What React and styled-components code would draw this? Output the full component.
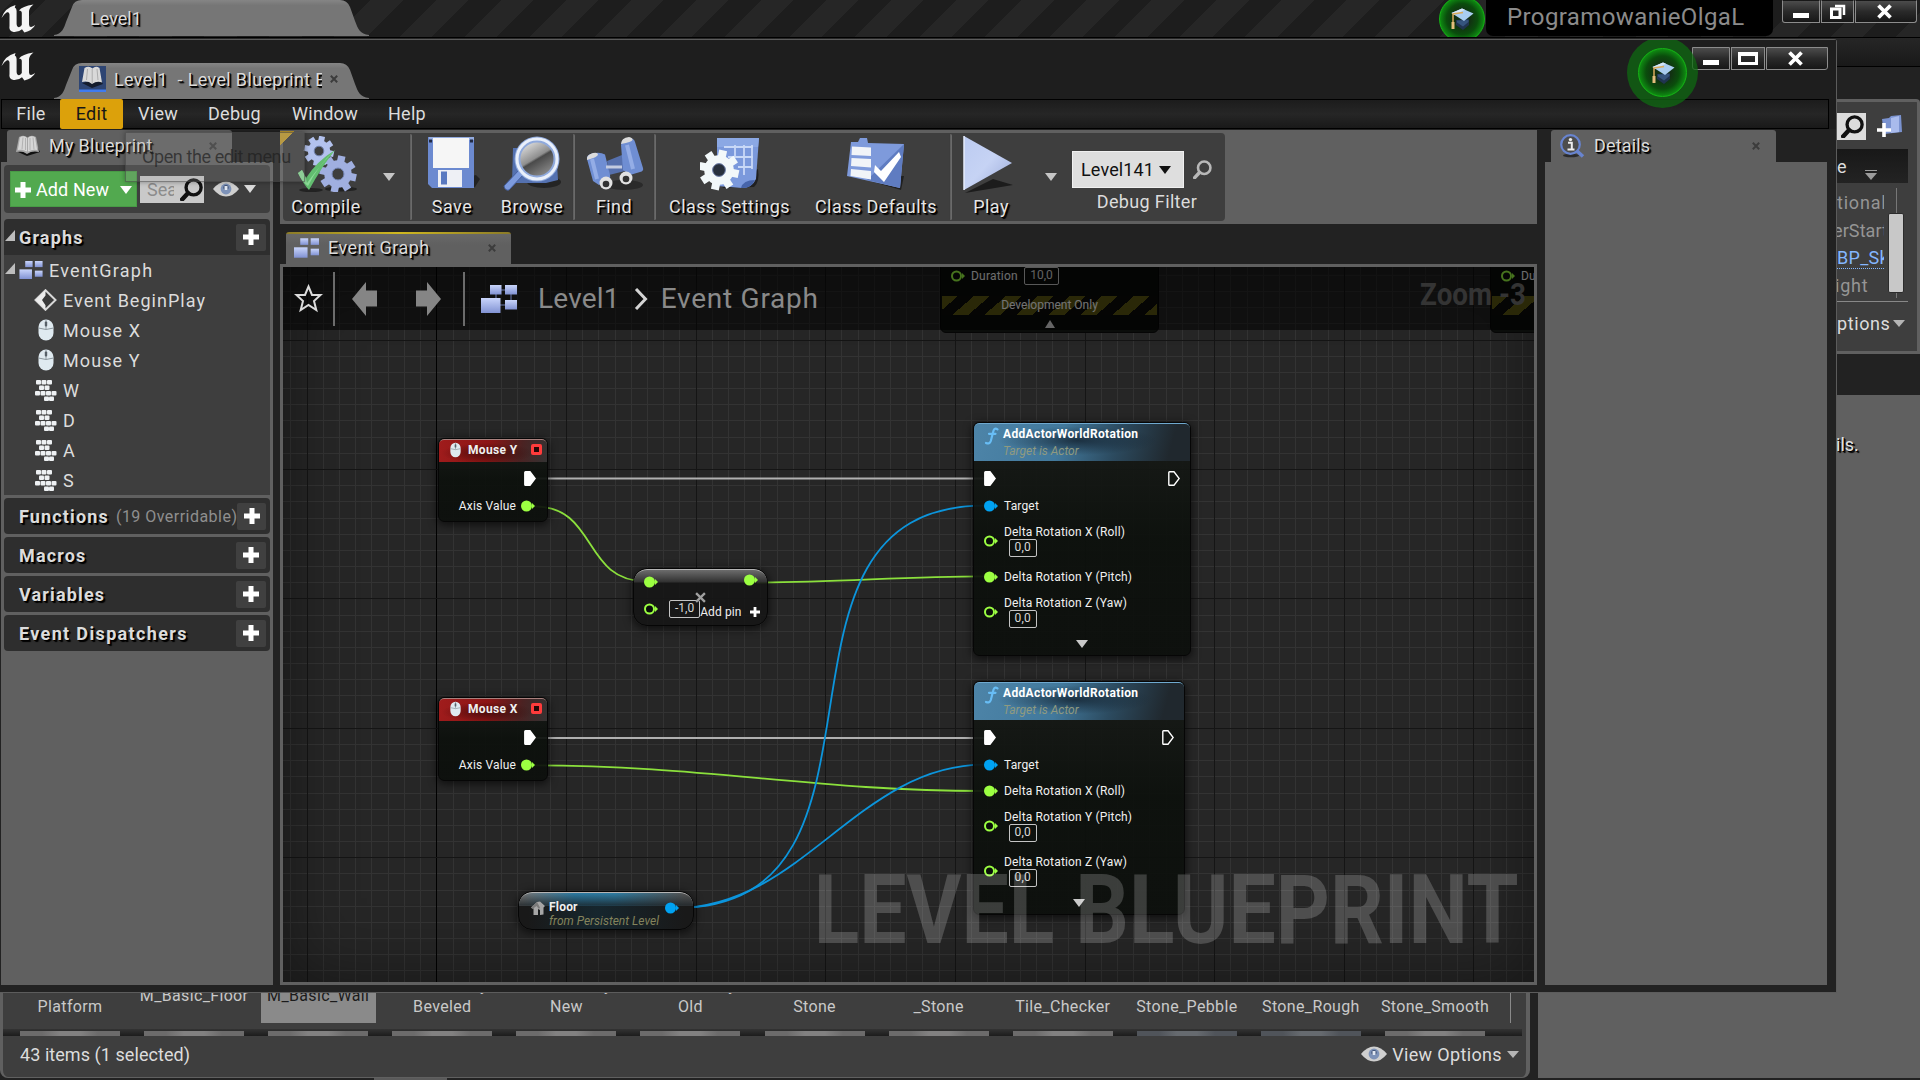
import React from 'react';
import styled, { createGlobalStyle, css } from 'styled-components';

const Global = createGlobalStyle`
  *, *::before, *::after { box-sizing: border-box; }
  body { margin: 0; background: #222; overflow: hidden; }
  svg { display: block; flex: none; }
`;

const GREEN = '#9cff42';
const BLUE = '#00a2f2';

/* ---------- shared pieces ---------- */

const Desktop = styled.div`
  position: relative;
  width: 1920px;
  height: 1080px;
  overflow: hidden;
  background: #222;
  color: #dcdcdc;
  font-family: Roboto, 'Liberation Sans', sans-serif;
  font-size: 18px;
  white-space: nowrap;
  cursor: default;
`;

const Text = styled.span`
  flex: none;
  font-size: ${(p) => p.$size || 18}px;
  font-weight: ${(p) => (p.$bold ? 700 : 400)};
  font-style: ${(p) => (p.$italic ? 'italic' : 'normal')};
  letter-spacing: ${(p) => p.$ls || 0}px;
  color: ${(p) => p.$color || 'inherit'};
  ${(p) => p.$shadow && css`text-shadow: 1px 1px 0 #000, 2px 2px 1px #000;`}
`;

const Caret = styled.span`
  flex: none;
  width: 0;
  height: 0;
  border-left: ${(p) => p.$w || 6}px solid transparent;
  border-right: ${(p) => p.$w || 6}px solid transparent;
  border-top: ${(p) => p.$h || 8}px solid ${(p) => p.$color || '#c6c6c6'};
  ${(p) => p.$up && css`transform: rotate(180deg);`}
`;

const Spacer = styled.div`flex: 1;`;

/* ---------- icons ---------- */

const Logo = () => (
  <svg width="35" height="29" viewBox="0 0 35 29">
    <path
      d="M.5 14Q3.500 4 14.500 1L13.800 3.400Q15.600 4 15.600 7v13Q15.800 23 18 23.200 19.600 22.800 20.800 21V9Q20.800 6.400 18 6.400 21 2.600 32.500.6 28.500 3.400 28 7v13.500q.2 2.700 2.200 2.500 1.800-.4 4-1.900Q31.500 26.500 23.400 28.500l-2.400-3.300Q17.500 28.400 12.500 28 7.500 27 8.500 21.500V10.500Q8.300 7.600 6 8.300 3 9.800.5 14Z"
      fill="#f4f4f4"
    />
  </svg>
);

const BookIcon = ({ w = 25, h = 22 }) => (
  <svg width={w} height={h} viewBox="0 0 25 22">
    <path d="M3 17 12 21l13-4-2-4z" fill="#111" />
    <path d="M4 2 1 17q6-1.500 11 2 5-3.500 12-2L21 2q-5-2.500-8.500.5Q9-.5 4 2Z" fill="#a8a8a8" />
    <path d="M5 2.500 2.800 15q5-.8 9.200 1.500V3Q9 0 5 2.500ZM20 2.500 22.200 15q-5-.8-9.200 1.500V3q3-3 7-.5Z" fill="#d6d6d6" />
    <path d="M8 2.500 7 14.500M10.500 3v12M15 3v12M18 2.500l1 12" stroke="#b2b2b2" strokeWidth="1" />
  </svg>
);

const LevelBookIcon = () => (
  <svg width="27" height="26" viewBox="0 0 27 26">
    <rect width="27" height="26" fill="#2e4573" />
    <rect y="23.500" width="27" height="2.500" fill="#3f7bf0" />
    <path d="M3 17 13 22l11-4-3-5z" fill="#141c2d" />
    <path d="M5.500 2 3 16q6-1.500 10 2 5-3.500 10-1.500L20.500 2q-4-2.500-7 .5Q10-.5 5.500 2Z" fill="#d9d9d9" />
    <path d="M13.200 3v14M8.500 3l-1 11M18 3l1 11" stroke="#adadad" strokeWidth="1" />
  </svg>
);

const CrossIcon = ({ s = 8, color = '#3c3c3c', w = 2 }) => (
  <svg width={s} height={s} viewBox="0 0 8 8">
    <path d="M.8.8 7.200 7.200M7.200.8.8 7.200" stroke={color} strokeWidth={w} />
  </svg>
);

const PlusIcon = ({ s = 16, w = 5 }) => (
  <svg width={s} height={s} viewBox="0 0 16 16">
    <path d="M8 0v16M0 8h16" stroke="#fff" strokeWidth={w} />
  </svg>
);

const Lens = ({ s = 22, color = '#111', w = 3.2 }) => (
  <svg width={s} height={s} viewBox="0 0 22 22">
    <circle cx="13" cy="9" r="7.200" fill="none" stroke={color} strokeWidth={w} />
    <path d="M7.500 14.500 2 20.500" stroke={color} strokeWidth={w + 1} strokeLinecap="round" />
  </svg>
);

const EyeIcon = () => (
  <svg width="26" height="16" viewBox="0 0 26 16">
    <path d="M0 8Q6 .5 13 .5T26 8q-6 7.500-13 7.500T0 8Z" fill="#cfcfcf" />
    <circle cx="13" cy="8" r="5.400" fill="#7d92b8" />
    <circle cx="13" cy="6.500" r="2.600" fill="#3c4f73" />
    <path d="M11.500 5h3v4h-3z" fill="#e0e7f2" />
  </svg>
);

const GraphIcon = ({ w = 25, h = 20, links }) => (
  <svg width={w} height={h} viewBox="0 0 36 28">
    <defs>
      <linearGradient id="gi" x1="0" y1="0" x2="0" y2="1">
        <stop offset="0" stopColor="#c9d5fb" />
        <stop offset="1" stopColor="#8192d3" />
      </linearGradient>
    </defs>
    {links && <path d="M20 5h6M15 8v8M30 8v9M18 20h8" stroke="#3e4560" strokeWidth="2" />}
    <rect x="9" y="0" width="11.500" height="9.500" fill="url(#gi)" />
    <rect x="24" y="0" width="12" height="9.500" fill="url(#gi)" />
    <rect x="0" y="13" width="19.500" height="15" fill="url(#gi)" />
    <rect x="24" y="15" width="12" height="9.500" fill="url(#gi)" />
  </svg>
);

const DiamondIcon = () => (
  <svg width="23" height="22" viewBox="0 0 23 22">
    <path d="M11.500 1.200 21.500 11 11.500 20.800 1.500 11Z" fill="#3a3a3a" stroke="#d8d8d8" strokeWidth="2" />
    <path d="M11.500 1.200 1.500 11l10 9.800v-4.500L8 11l3.500-4.500Z" fill="#ececec" />
  </svg>
);

const MouseIcon = ({ w = 16, h = 22 }) => (
  <svg width={w} height={h} viewBox="0 0 16 22">
    <rect x=".5" y=".5" width="15" height="21" rx="7.500" fill="#dfeaf0" />
    <path d="M.5 9q7.500 3 15 0M8 .5V10" stroke="#8b979e" strokeWidth="1" fill="none" />
    <rect x="6.800" y="2.500" width="2.400" height="5" rx="1" fill="#566068" />
  </svg>
);

const KeysIcon = () => (
  <svg width="23" height="23" viewBox="0 0 23 23">
    <g fill="#eef1f3">
      {[[2, 1], [7.500, 1], [13, 1], [5, 6.500], [10.500, 6.500], [1, 12], [6.500, 12], [12, 12], [17.500, 12], [10, 17.500], [15, 17.500]].map(([x, y]) => (
        <rect key={`${x}-${y}`} x={x} y={y} width="5" height="4.600" rx="1" />
      ))}
    </g>
  </svg>
);

const GradCap = () => (
  <svg width="24" height="22" viewBox="0 0 24 22">
    <path d="M6 12v5l7 5 6-5v-6z" fill="#20344f" />
    <path d="M7 12.500v2l6 4 5.500-4.500v-2z" fill="#35547d" />
    <path d="M1.500 5 12 .5l11.500 5L14 13z" fill="#a9cdf0" />
    <path d="M1.500 5 12 .5l3 1.300L4 7z" fill="#d3e6f8" />
    <path d="M13 4.500 3 6v13" stroke="#d9aa5c" strokeWidth="1.500" fill="none" />
    <path d="M3 14v7" stroke="#e3bd7c" strokeWidth="3" />
  </svg>
);

const Gear = ({ cx, cy, r, fill, hole = '#3e3e3e', n = 8 }) => {
  const teeth = Array.from({ length: n }, (_, i) => (
    <rect key={i} x={cx - r * 0.2} y={cy - r} width={r * 0.4} height={r * 0.5} fill={fill} transform={`rotate(${(360 / n) * i + 12} ${cx} ${cy})`} />
  ));
  return (
    <g>
      {teeth}
      <circle cx={cx} cy={cy} r={r * 0.74} fill={fill} />
      <circle cx={cx} cy={cy} r={r * 0.32} fill={hole} stroke="#6f80ad" strokeWidth="1" />
    </g>
  );
};

const CompileIcon = () => (
  <svg width="60" height="56" viewBox="0 0 60 56">
    <ellipse cx="44" cy="53" rx="16" ry="2.500" fill="#222" />
    <ellipse cx="14" cy="54" rx="12" ry="2" fill="#222" />
    <Gear cx={22} cy={15} r={15} fill="#b3c2ee" />
    <Gear cx={41} cy={38} r={18.500} fill="#a0afe0" />
    <path d="M1 37 5 34l4 8Q20 25 38 14 24 32 12 54 7 49 1 37Z" fill="#62bd70" />
    <path d="M1 37 5 34l4 8 1 5Q24 28 38 14 22 28 11 50 5 46 1 37Z" fill="#8bdc97" />
  </svg>
);

const SaveIcon = () => (
  <svg width="52" height="54" viewBox="0 0 52 54">
    <path d="M5 50h42l5-8-4-4z" fill="#222" />
    <path d="M0 0h46v51H4L0 47z" fill="#6c8ad0" />
    <path d="M1 0h45v3H1z" fill="#93abdf" />
    <rect x="5" y="1" width="36" height="30" fill="#f6f6f6" />
    <rect x="1" y="2.500" width="3" height="3" fill="#222b45" />
    <rect x="42" y="2.500" width="3" height="3" fill="#222b45" />
    <rect x="10" y="33" width="24" height="17" fill="#eef0f5" />
    <rect x="13" y="34.500" width="6" height="13" fill="#5a79c0" />
  </svg>
);

const BrowseIcon = () => (
  <svg width="60" height="56" viewBox="0 0 60 56">
    <defs>
      <linearGradient id="lens" x1="0" y1="0" x2=".6" y2="1">
        <stop offset="0" stopColor="#fff" />
        <stop offset=".55" stopColor="#8e8e8e" />
        <stop offset=".6" stopColor="#4a4a4a" />
        <stop offset="1" stopColor="#8c8c8c" />
      </linearGradient>
    </defs>
    <ellipse cx="42" cy="46" rx="17" ry="6" fill="#242424" />
    <path d="M11 12h43l2 32-12 3H10z" fill="#5471b0" />
    <path d="M2 50 17 34l5 4L7 54Q3 55 2 50Z" fill="#7d9bde" stroke="#455f9f" strokeWidth="1" />
    <circle cx="35" cy="23" r="19.500" fill="url(#lens)" stroke="#8fa9dc" strokeWidth="6" />
    <circle cx="35" cy="23" r="20" fill="none" stroke="#eaf0fb" strokeWidth="3" />
  </svg>
);

const FindIcon = () => (
  <svg width="58" height="54" viewBox="0 0 58 54">
    <ellipse cx="38" cy="48" rx="19" ry="5" fill="#2a2a2a" />
    <path d="M21 24 36 18l3 16-16 4z" fill="#5670ad" />
    <path d="M1 22Q0 18 6 16.500q8-2 13 1L24 38q1 4-3 6l-8 4-6-4Z" fill="#6f8ed3" />
    <path d="M35 8q0-6 8-7 5 0 6 4l8 26q1 3-3 4l-10 3-7-5Z" fill="#6f8ed3" />
    <path d="M6 22 11 42M41 8l6 24" stroke="#94ade6" strokeWidth="4" />
    <path d="M1 23q-1-5 6-7 5-1 5 1.500T1 23ZM35 7q0-6 8-7 4 1 3.500 3T35 7Z" fill="#dcdcdc" />
    <path d="M20 30h16" stroke="#c3cbe0" strokeWidth="3" />
    <circle cx="20" cy="46" r="6.500" fill="#e2e2e2" /><circle cx="20" cy="47" r="3.300" fill="#333" />
    <circle cx="40" cy="41" r="6.500" fill="#e2e2e2" /><circle cx="40" cy="42" r="3.300" fill="#333" />
  </svg>
);

const SettingsIcon = () => (
  <svg width="60" height="54" viewBox="0 0 60 54">
    <path d="M22 51 54 50q6-5 4-18z" fill="#202020" />
    <path d="M17 1h42l-3 41q-4 9-14 9l-25-2Z" fill="#7b99dc" />
    <path d="M17 1h42l-1 9H17z" fill="#8ba8e4" />
    <path d="M24 10h29M28 20h25M38 30h14M35 8v12M44 8v30M52 8v24" stroke="#c8d8f7" strokeWidth="1.800" fill="none" />
    <path d="M41 51q2-8 14-8-4 9-14 8Z" fill="#4765ab" />
    <Gear cx={19} cy={33} r={20} fill="#f2f8fa" hole="#27303d" />
  </svg>
);

const DefaultsIcon = () => (
  <svg width="58" height="52" viewBox="0 0 58 52">
    <path d="M6 38 54 52l3-14z" fill="#202020" />
    <path d="M4 4h7l2-4h7l1 5 36 1-4 44L0 38Z" fill="#7e9adb" />
    <path d="M57 6 53 50 20 42Z" fill="#5f7cc1" />
    <path d="M5 8.500 24 9.500V18L4.500 17ZM4.500 20 24 21v8.500L4 28ZM4 31l20 2v8.500L3.500 38Z" fill="#f1f4f8" />
    <path d="M28 27 34 33 52 14 54 19 37 44 27 34Z" fill="#fff" />
  </svg>
);

const PlayIcon = () => (
  <svg width="52" height="58" viewBox="0 0 52 58">
    <defs>
      <linearGradient id="pl" x1="0" y1="0" x2="1" y2="1">
        <stop offset="0" stopColor="#bccbf1" />
        <stop offset=".5" stopColor="#c6d3f4" />
        <stop offset="1" stopColor="#9aa9d8" />
      </linearGradient>
    </defs>
    <path d="M2 58 50 50 30 44z" fill="#1c1c1c" />
    <path d="M1 1 49 28 1 55Z" fill="url(#pl)" />
    <path d="M1 1v54" stroke="#e6edfb" strokeWidth="1.500" />
  </svg>
);

const InfoLens = () => (
  <svg width="25" height="24" viewBox="0 0 25 24">
    <ellipse cx="11" cy="21.500" rx="8" ry="1.800" fill="#2b2b2b" />
    <circle cx="10.500" cy="10.500" r="9.300" fill="#4d4d4d" stroke="#6884cf" strokeWidth="2.200" />
    <path d="M17 17 23 22.500" stroke="#6884cf" strokeWidth="3.500" />
    <circle cx="10.500" cy="5.600" r="1.700" fill="#eee" />
    <path d="M8 8.700h3.800v6.500M7.500 15.500h7" stroke="#eee" strokeWidth="2" fill="none" />
  </svg>
);

const FolderPlus = () => (
  <svg width="26" height="23" viewBox="0 0 26 23">
    <path d="M5 4 12 3l2-2 10-1 1 17-18 2z" fill="#7b93d0" />
    <path d="M14 3 22 1v16l-8 1z" fill="#a9bbec" />
    <path d="M7 8v14M0 15h14" stroke="#fff" strokeWidth="3.600" />
  </svg>
);

/* ---------- window chrome ---------- */

const TabShape = styled.div`
  width: 315px;
  height: 36px;
  flex: none;
  display: flex;
  align-items: center;
  padding: ${(p) => p.$pad};
  background: linear-gradient(#858585, #767676 15%, #767676);
  clip-path: path('M0 36 L0 35 C8 34 10 28 12 22 L18 7 Q20 0 28 0 H286 Q293 0 296 7 L301 21 C304 29 306 34 315 35 L315 36 Z');
`;

const TabTitle = styled.div`
  width: 208px;
  overflow: hidden;
`;

const ControlGroup = styled.div`
  display: flex;
  align-self: flex-start;
  gap: 1px;
  margin-top: ${(p) => p.$top}px;
  height: 23px;
  flex: none;
`;

const Control = styled.div`
  width: ${(p) => p.$w}px;
  display: flex;
  align-items: center;
  justify-content: center;
  padding-right: ${(p) => p.$pr || 0}px;
  border: 1px solid #8c8c8c;
  border-top-color: ${(p) => (p.$open ? 'transparent' : '#8c8c8c')};
  border-radius: ${(p) => p.$r || '0'};
  background: linear-gradient(#4c4c4c, #2a2a2a 50%, #171717);
`;

const MinGlyph = styled.div`width: 16px; height: 5px; margin-top: 7px; background: #fff;`;
const MaxGlyph = styled.div`width: 20px; height: 13px; border: 3px solid #fff; border-top-width: 4px;`;

const RestoreGlyph = () => (
  <svg width="16" height="15" viewBox="0 0 16 15">
    <path d="M5 2h9v9" fill="none" stroke="#fff" strokeWidth="2.500" />
    <rect x="1.500" y="5" width="8.500" height="8.500" fill="none" stroke="#fff" strokeWidth="3" />
  </svg>
);

/* ---------- back window ---------- */

const BackWindow = styled.div`
  display: flex;
  flex-direction: column;
  width: 1920px;
  height: 1080px;
`;

const BackTitle = styled.div`
  flex: none;
  height: 37px;
  display: flex;
  align-items: flex-start;
  background: repeating-linear-gradient(135deg, #262626 0 9.300px, #1d1d1d 9.300px 32.300px, #262626 32.300px 46px);
`;

const LogoBox = styled.div`
  width: 54px;
  padding: ${(p) => p.$top}px 0 0 1px;
  flex: none;
`;

const TutorialBadge = styled.div`
  width: 46px;
  height: 46px;
  margin: -4px 1px 0 0;
  border-radius: 50%;
  border: 1.500px solid #15b415;
  display: flex;
  align-items: center;
  justify-content: center;
  flex: none;
  background: radial-gradient(circle, #123012 25%, #0a4d0c 50%, #0f8f12 72%);
`;

const ProjectName = styled.div`
  width: 287px;
  height: 36px;
  padding-left: 21px;
  margin-right: 9px;
  border-radius: 0 0 7px 7px;
  background: #000;
  line-height: 35px;
  color: #8b8b8b;
`;

const BackMenu = styled.div`
  flex: none;
  height: 30px;
  border: solid #000;
  border-width: 1px 0;
  background: linear-gradient(#262626, #191919);
`;

const BackBody = styled.div`flex: 1; display: flex; gap: 8px; min-height: 0;`;
const BackLeft = styled.div`width: 1530px; display: flex; flex-direction: column; justify-content: flex-end;`;
const BackRight = styled.div`flex: 1; display: flex; flex-direction: column; padding-top: 32px;`;

const ContentBrowser = styled.div`
  height: 178px;
  display: flex;
  flex-direction: column;
  justify-content: flex-end;
  border: solid #606060;
  border-width: 0 4px 1px 3px;
  border-radius: 0 0 8px 8px;
  background: #3e3e3e;
`;

const BottomEdge = styled.div`
  height: 2px;
  flex: none;
  padding-left: 374px;
  &::before { content: ''; display: block; width: 73px; height: 2px; background: #5a5a5a; }
`;

const AssetArea = styled.div`
  margin: 0 15px 6px 0;
  padding-left: 9.500px;
  display: flex;
  gap: 9.100px;
  border-right: 1px solid #8a8a8a;
`;

const Asset = styled.div`
  width: 115px;
  height: 99px;
  flex: none;
  padding-bottom: 7px;
  display: flex;
  flex-direction: column;
  justify-content: flex-end;
  color: ${(p) => (p.$selected ? '#1b1b1b' : '#c9c9c9')};
  background: ${(p) => (p.$selected ? '#8a8a8a' : 'transparent')};
`;

const AssetName = styled.div`
  height: 41px;
  display: flex;
  flex-direction: column;
  justify-content: center;
  text-align: center;
  font-size: 16px;
  letter-spacing: 0.350px;
  line-height: 21px;
`;

const ThumbStrip = styled.div`
  display: flex;
  gap: 24.100px;
  height: 7px;
  margin-right: 4px;
  padding: 2px 0 0 17px;
  background: linear-gradient(#333, #1c1c1c);
`;

const Thumb = styled.div`
  width: 100px;
  flex: none;
  background: linear-gradient(90deg, ${(p) => p.$c} 0 22%, ${(p) => p.$m} 40% 60%, ${(p) => p.$c} 78%);
`;

const BrowserFooter = styled.div`
  height: 41px;
  display: flex;
  align-items: center;
  gap: 5px;
  padding: 0 7px 5px 17px;
`;

const Outliner = styled.div`
  height: 255px;
  border: 3px solid #606060;
  border-left: 0;
  border-radius: 0 4px 0 0;
  background: #3e3e3e;
  padding: 11px 9px 0 299px;
`;

const OutSearch = styled.div`
  display: flex;
  align-items: center;
  justify-content: space-between;
  height: 27px;
  padding-right: 5px;
`;

const OutField = styled.div`
  width: 29px;
  height: 27px;
  display: flex;
  align-items: center;
  justify-content: flex-end;
  padding-right: 2px;
  background: #dcdcdc;
`;

const OutHeader = styled.div`
  height: 34px;
  margin: 9px 0 3px;
  display: flex;
  justify-content: space-between;
  align-items: center;
  padding-right: 31px;
  background: linear-gradient(#181818, #232323);
`;

const SortMark = styled.div`
  padding-top: 2px;
  margin-top: 17px;
  border-top: 1.500px solid #9c9c9c;
`;

const OutList = styled.div`
  display: flex;
  height: 116px;
  padding-top: 2px;
  border-bottom: 1px solid #888;
`;

const OutRows = styled.div`width: 47px; color: #959595; padding-top: 1px;`;

const OutRow = styled.div`
  width: 47px;
  height: 27.500px;
  line-height: 27.500px;
  overflow: hidden;
  text-indent: ${(p) => p.$shift || 0}px;
  letter-spacing: ${(p) => p.$ls || 0.8}px;
  color: ${(p) => (p.$link ? '#84b6ff' : 'inherit')};
`;

const LinkText = styled.span`
  border-bottom: 1px dotted #84b6ff;
`;

const OutTrack = styled.div`
  width: 16px;
  margin-left: 4px;
  height: 110px;
  padding-top: 25px;
  background: linear-gradient(#777, #777) center / 1px 100% no-repeat;
`;

const OutThumb = styled.div`height: 80px; border-radius: 2px; background: #c8c8c8; border: 1px solid #2c2c2c;`;

const OutFooter = styled.div`
  display: flex;
  align-items: center;
  gap: 3px;
  height: 43px;
  letter-spacing: 0.600px;
`;

const BackDetails = styled.div`
  flex: 1;
  margin: 41px 0 2px;
  padding: 39px 0 0 298px;
  background: #606060;
  color: #e4e4e4;
`;

/* ---------- front window ---------- */

const FrontWindow = styled.div`
  position: absolute;
  left: 0;
  top: 39px;
  width: 1837px;
  height: 954px;
  display: flex;
  flex-direction: column;
  border: solid #5c5c5c;
  border-width: 1px 1px 1px 0;
  border-top-right-radius: 3px;
  background: #1d1d1d;
`;

const FrontTitle = styled.div`
  height: 59px;
  flex: none;
  display: flex;
  background: #1e1e1e;
`;

const TabHolder = styled.div`display: flex; align-items: flex-end;`;

const BigBadge = styled.div`
  width: 71px;
  height: 71px;
  margin: -3px -6px 0 0;
  border-radius: 50%;
  flex: none;
  display: flex;
  align-items: center;
  justify-content: center;
  background: rgba(15, 105, 18, 0.750);
  clip-path: inset(3px 0 0 0);
  & > div { width: 49px; height: 49px; margin: 0; }
`;

const MenuBar = styled.div`
  height: 30px;
  flex: none;
  margin-right: 7px;
  margin-left: 1px;
  display: flex;
  border: 1px solid #000;
  background: linear-gradient(#1c1c1c, #262626 50%, #191919);
`;

const MenuItem = styled.div`
  width: ${(p) => p.$w}px;
  line-height: 29px;
  text-align: center;
  letter-spacing: 0.300px;
  margin: -1px 0;
  ${(p) => p.$active && css`background: #dca10b; color: #171717; border-radius: 2px;`}
`;

const Body = styled.div`
  flex: 1;
  min-height: 0;
  display: flex;
  padding: 1px 9px 7px 1px;
  background: #222;
`;

const Column = styled.div`
  width: ${(p) => p.$w}px;
  margin-right: ${(p) => p.$gap || 0}px;
  flex: none;
  display: flex;
  flex-direction: column;
`;

const PanelTab = styled.div`
  width: 225px;
  height: 32px;
  margin-left: 6px;
  padding: ${(p) => p.$pad};
  flex: none;
  display: flex;
  align-items: center;
  border-radius: 3px 3px 0 0;
  background: #606060;
  ${(p) => p.$accent && css`
    background: linear-gradient(90deg, #8a7a28, #d0b820 50%, #8a7a28) top / 100% 2px no-repeat, linear-gradient(#6a6a6a, #606060 40%);
  `}
`;

const TabLabel = styled.div`
  margin: -2px 0 0 9px;
  flex: 1;
`;

const Panel = styled.div`
  flex: 1;
  min-height: 0;
  background: #606060;
  padding: 3px;
  display: flex;
  flex-direction: column;
`;

const PanelTools = styled.div`
  height: 48px;
  flex: none;
  display: flex;
  align-items: center;
  padding: 0 14px 0 6px;
  margin-bottom: 6px;
  border-radius: 4px;
  background: #3e3e3e;
`;

const AddNew = styled.div`
  width: 127px;
  height: 36px;
  display: flex;
  align-items: center;
  gap: 5px;
  padding: 1px 7px 0 4px;
  margin: 0 3px 0 0;
  color: #fff;
  background: #52a94f;
  border: 1px solid #489a46;
`;

const SearchField = styled.div`
  width: 64px;
  height: 27px;
  display: flex;
  align-items: center;
  justify-content: space-between;
  padding: 0 1px 0 7px;
  margin-right: 9px;
  color: #8c8c8c;
  background: #c9c9c9;
`;

const Clip = styled.div`width: ${(p) => p.$w}px; overflow: hidden;`;

const Section = styled.div`
  height: 36px;
  margin-bottom: ${(p) => (p.$open ? 0 : 3)}px;
  flex: none;
  display: flex;
  align-items: center;
  padding: 0 4px 0 ${(p) => (p.$open ? 1 : 15)}px;
  border-radius: ${(p) => (p.$open ? '4px 4px 0 0' : '4px')};
  background: #2e2e2e;
`;

const SectionAdd = styled.div`
  width: 30px;
  height: 27px;
  display: flex;
  align-items: center;
  justify-content: center;
  border-radius: 2px;
  background: #404040;
`;

const Tree = styled.div`
  background: #3e3e3e;
  margin-bottom: 3px;
`;

const TreeRow = styled.div`
  height: 30px;
  display: flex;
  align-items: center;
  padding-left: ${(p) => p.$pl}px;
`;

const TreeIcon = styled.div`
  width: ${(p) => p.$w}px;
  margin-right: 6px;
  display: flex;
  justify-content: center;
`;

const Twisty = styled.span`
  width: 0;
  height: 0;
  margin-right: 4px;
  margin-top: -4px;
  border-left: 10px solid transparent;
  border-bottom: 11px solid #bdbdbd;
`;

const Toolbar = styled.div`
  height: 94px;
  flex: none;
  margin-bottom: 8px;
  padding: 3px;
  display: flex;
  background: #606060;
`;

const ToolStrip = styled.div`
  width: 942px;
  height: 88px;
  display: flex;
  border-radius: 4px;
  background: #3e3e3e;
`;

const Tool = styled.div`
  width: ${(p) => p.$w}px;
  flex: none;
  padding-top: 3px;
  display: flex;
  flex-direction: column;
  align-items: center;
`;

const ToolPicture = styled.div`height: 56px; display: flex; align-items: center; margin-left: ${(p) => p.$ml || 0}px;`;
const ToolLabel = styled.div`
  line-height: 29px;
  letter-spacing: 0.450px;
  color: #e6e6e6;
  text-shadow: 1px 1px 0 #000, 2px 2px 1px #000;
`;

const ToolArrow = styled.div`
  width: ${(p) => p.$w}px;
  display: flex;
  justify-content: center;
  padding-top: 40px;
`;

const ToolRule = styled.div`
  width: 3px;
  margin: 1px 0;
  flex: none;
  border-radius: 2px;
  background: linear-gradient(90deg, #2a2a2a, #6a6a6a 60%);
`;

const Filter = styled.div`
  width: 150px;
  padding-top: 18px;
  display: flex;
  flex-direction: column;
  align-items: center;
  line-height: 28px;
`;

const FilterRow = styled.div`
  width: 150px;
  display: flex;
  align-items: center;
  gap: 9px;
`;

const Combo = styled.div`
  width: 112px;
  height: 37px;
  display: flex;
  align-items: center;
  gap: 5px;
  padding-left: 8px;
  color: #111;
  background: #dedede;
  border: 1px solid #f0f0f0;
`;

/* ---------- graph ---------- */

const GraphPanel = styled.div`
  height: 721px;
  border: 3px solid #606060;
  display: flex;
`;

const Canvas = styled.div`
  position: relative;
  flex: 1;
  overflow: hidden;
  background: #262626;
`;

const Layer = styled.svg`
  position: absolute;
  left: 0;
  top: 0;
`;

const Vignette = styled.div`
  position: absolute;
  inset: 0;
  box-shadow: inset 0 0 70px rgba(0, 0, 0, 0.450);
`;

const Crumbs = styled.div`
  position: absolute;
  left: 0;
  top: 0;
  width: 100%;
  height: 63px;
  display: flex;
  align-items: center;
  padding: 0 8px 0 11px;
  background: rgba(0, 0, 0, 0.550);
  color: #8a8a8a;
`;

const CrumbRule = styled.div`
  width: 2px;
  height: 54px;
  margin: ${(p) => p.$m};
  background: #6c6c6c;
`;

const Condensed = styled.div`
  font-weight: 700;
  font-size: ${(p) => p.$size}px;
  line-height: 1;
  color: ${(p) => p.$color};
  transform: scaleX(${(p) => p.$sx}) translateY(${(p) => p.$dy || 0}px);
  transform-origin: right center;
`;

const Watermark = styled.div`
  position: absolute;
  right: 15px;
  bottom: 24px;
`;

const NodeBox = styled.div`
  position: absolute;
  left: ${(p) => p.$x - 283}px;
  top: ${(p) => p.$y - 267}px;
  width: ${(p) => p.$w}px;
  height: ${(p) => p.$h}px;
  overflow: hidden;
  border: 1.500px solid #060606;
  border-radius: ${(p) => p.$r || 6}px;
  background: ${(p) => p.$bg || 'linear-gradient(rgba(24,27,24,.94), rgba(12,16,12,.93) 50%, rgba(12,15,12,.93))'};
  color: #f0f0f0;
  font-size: 12px;
`;

const NodeGlow = styled.div`
  position: absolute;
  left: ${(p) => p.$x - 283}px;
  top: ${(p) => p.$y - 267}px;
  width: ${(p) => p.$w}px;
  height: ${(p) => p.$h}px;
  border-radius: ${(p) => p.$r || 6}px;
  box-shadow: 0 2px 8px 1px rgba(0, 0, 0, 0.600);
`;

const EventHead = styled.div`
  height: 23px;
  display: flex;
  align-items: center;
  gap: 7px;
  padding: 0 5px 3px 11px;
  border-top: 1px solid #a8807d;
  border-radius: 5px 5px 0 0;
  background: radial-gradient(ellipse at 45% 60%, rgba(50, 8, 6, 0.700), transparent 55%), linear-gradient(100deg, #a01c1c, #8c1515 45%, #4b2222 75%, #333 100%);
`;

const RedSquare = styled.div`
  width: 11px;
  height: 11px;
  margin-left: auto;
  border: 3px solid #ff3b3b;
  border-radius: 2px;
  background: #260707;
`;

const OutPinRow = styled.div`
  height: ${(p) => p.$h}px;
  display: flex;
  align-items: center;
  justify-content: flex-end;
  gap: 5px;
  padding-right: ${(p) => p.$pr}px;
`;

const FuncHead = styled.div`
  height: 38px;
  display: flex;
  padding: 3px 0 0 10px;
  gap: 4px;
  border-top: 1.500px solid #6fa9cf;
  border-radius: 5px 5px 0 0;
  background: radial-gradient(ellipse at 48% 45%, rgba(22, 38, 52, 0.850), transparent 50%), linear-gradient(105deg, #4d84a8, #42799c 40%, #2c4b60 65%, #20282e 90%);
`;

const FuncTitles = styled.div`display: flex; flex-direction: column; line-height: 17px; margin-top: -1px;`;

const FuncGlyph = () => (
  <svg width="15" height="18" viewBox="0 0 15 18">
    <path d="M13.500 2.300Q10.500.3 9.400 4L6.800 14Q5.600 17.600 2 15.900M5 6.800h6.500" fill="none" stroke="#68bdf5" strokeWidth="2.200" strokeLinecap="round" />
  </svg>
);

const PinRow = styled.div`
  height: ${(p) => p.$h || 26}px;
  display: flex;
  align-items: center;
  gap: 6.500px;
  padding: ${(p) => p.$pt || 0}px 10px 0 9.500px;
`;

const PinLabel = styled.div`
  display: flex;
  flex-direction: column;
  align-items: flex-start;
  line-height: 14px;
  letter-spacing: 0.160px;
`;

const ValueBox = styled.div`
  min-width: 27px;
  height: 18px;
  margin-left: ${(p) => p.$ml || 0}px;
  padding: 0 5px;
  line-height: 15px;
  text-align: center;
  border: 1px solid #c4c4c4;
  border-radius: 2px;
  color: #d8d8d8;
`;

const CenterRow = styled.div`display: flex; justify-content: center; padding-top: ${(p) => p.$pt}px;`;

const Hazard = styled.div`
  height: 19px;
  margin: 0 1px;
  line-height: 19px;
  text-align: center;
  color: #fff;
  background: repeating-linear-gradient(139deg, #5e5a12 0 10.500px, #0c0c0a 10.500px 21px);
`;

const Gloss = styled.div`
  position: absolute;
  inset: 0;
  border-radius: 13px;
  border-top: 1.500px solid #b4b4b4;
  background: ${(p) => p.$bg};
  clip-path: inset(0 0 ${(p) => p.$cut}% 0);
`;

const MathGrid = styled.div`
  position: relative;
  display: flex;
  justify-content: space-between;
  height: 100%;
  margin-top: -1px;
  padding: 0 9px 0 10px;
`;

const MathCol = styled.div`display: flex; flex-direction: column; align-items: ${(p) => p.$align || 'flex-start'};`;
const MathRow = styled.div`height: 27px; display: flex; align-items: center; gap: 12px; padding-right: ${(p) => p.$pr || 0}px;`;
const MathSign = styled.div`position: absolute; left: 61px; top: 24px;`;
const AddPin = styled.div`
  display: flex;
  align-items: center;
  gap: 8px;
  height: 27px;
  margin-top: 7px;
  letter-spacing: 0.100px;
`;

const FloorRow = styled.div`
  position: relative;
  display: flex;
  height: 100%;
  padding: 9px 0 0 12px;
  gap: 3px;
`;

const FloorTitles = styled.div`
  width: 113px;
  display: flex;
  flex-direction: column;
  line-height: 13.500px;
`;

const Pin = ({ color, filled }) => (
  <svg width="14" height="14" viewBox="0 0 14 14">
    <circle cx="5.500" cy="7" r={filled ? 5.500 : 4.500} fill={filled ? color : '#0a0d0a'} stroke={color} strokeWidth={filled ? 0 : 2} />
    <path d="M11 4 14 7l-3 3z" fill={color} />
  </svg>
);

const ExecPin = ({ filled }) => (
  <svg width="12" height="15" viewBox="0 0 12 15">
    <path d="M1.500.8H6L11.200 7.500 6 14.200H1.500Q.8 14.200.8 13.400V1.600Q.8.8 1.500.8Z" fill={filled ? '#fff' : 'none'} stroke="#fff" strokeWidth="1.400" />
  </svg>
);

const HouseIcon = () => (
  <svg width="15" height="15" viewBox="0 0 15 15">
    <path d="M0 6.500 6 1l3-.5L14 5l-1.500 1.500v7L9 14V9L7 8v6H2.500V7.500z" fill="#a6a6a6" />
    <path d="M0 6.500 6 1l3 5.500-1 1.500-2.500-3L1.500 8z" fill="#7a7a7a" />
  </svg>
);

const range = (start, step, end) => {
  const out = [];
  for (let v = start; v < end; v += step) out.push(v);
  return out;
};

const GridLines = () => {
  const stepX = 129.65 / 8;
  const stepY = 129.4 / 8;
  const xs = range(153.3 - stepX * 9, stepX, 1254);
  const ys = range(202 - stepY * 12, stepY, 720);
  const major = (i, off) => (i - off) % 8 === 0;
  return (
    <Layer width="1251" height="715" shapeRendering="crispEdges">
      {xs.map((x, i) => !major(i, 9) && <rect key={x} x={Math.round(x)} y="0" width="1" height="715" fill="#333" />)}
      {ys.map((y, i) => !major(i, 4) && <rect key={y} x="0" y={Math.round(y)} width="1251" height="1" fill="#333" />)}
      {xs.map((x, i) => major(i, 9) && <rect key={`m${x}`} x={Math.round(x)} y="0" width="1" height="715" fill={i === 9 ? '#000' : '#151515'} />)}
      {ys.map((y, i) => major(i, 4) && <rect key={`m${y}`} x="0" y={Math.round(y)} width="1251" height="1" fill="#151515" />)}
    </Layer>
  );
};

const wires = [
  { from: [534, 478.5], to: [984, 478.5], h: 50, c: '#b0b0b0' },
  { from: [534, 738], to: [984, 738], h: 50, c: '#b0b0b0' },
  { from: [534, 506.3], to: [646, 581.3], h: 64, c: '#8be03c' },
  { from: [757, 582.5], to: [984, 576.3], h: 80, c: '#8be03c' },
  { from: [534, 765.3], to: [984, 791], h: 170, c: '#8be03c' },
  { from: [676, 908], to: [984, 505.7], h: 245, c: '#0c95dc' },
  { from: [676, 908], to: [984, 764.7], h: 125, c: '#0c95dc' },
];

const Wires = () => (
  <Layer width="1251" height="715" viewBox="283 267 1251 715">
    {wires.map(({ from: [a, b], to: [c, d], h, c: color }) => (
      <path key={`${a}${b}${d}`} d={`M${a} ${b}C${a + h} ${b} ${c - h} ${d} ${c} ${d}`} fill="none" stroke={color} strokeWidth="1.800" />
    ))}
  </Layer>
);

const EventNode = ({ y, name }) => (
  <>
    <NodeGlow $x={438} $y={y} $w={110} $h={84} />
    <NodeBox $x={438} $y={y} $w={110} $h={84}>
      <EventHead>
        <MouseIcon w={11} h={16} />
        <Text $size={12} $bold $ls={0.35}>{name}</Text>
        <RedSquare />
      </EventHead>
      <OutPinRow $h={33} $pr={11}><ExecPin filled /></OutPinRow>
      <OutPinRow $h={21} $pr={12}><Text $size={12} $ls={0.15}>Axis Value</Text><Pin color={GREEN} filled /></OutPinRow>
    </NodeBox>
  </>
);

const FunctionNode = ({ y, w, inputs }) => (
  <>
    <NodeGlow $x={973} $y={y} $w={w} $h={234} />
    <NodeBox $x={973} $y={y} $w={w} $h={234}>
      <FuncHead>
        <FuncGlyph />
        <FuncTitles>
          <Text $size={12} $bold $ls={0.35} $color="#fff">AddActorWorldRotation</Text>
          <Text $size={12} $italic $color="#8f9a80">Target is Actor</Text>
        </FuncTitles>
      </FuncHead>
      <PinRow $h={34}><ExecPin filled /><Spacer /><ExecPin /></PinRow>
      <PinRow $h={21} $pt={1}><Pin color={BLUE} filled /><PinLabel>Target</PinLabel></PinRow>
      <CenterRow $pt={3} />
      {inputs.map(({ label, value }) => (
        <PinRow key={label} $h={value ? 44.5 : 26}>
          <Pin color={GREEN} filled={!value} />
          <PinLabel>
            {label}
            {value && <ValueBox $ml={4.5}>{value}</ValueBox>}
          </PinLabel>
        </PinRow>
      ))}
      <CenterRow $pt={6}><Caret $w={6} $h={8} $color="#c9c9c9" /></CenterRow>
    </NodeBox>
  </>
);

const DevNode = ({ x }) => (
  <NodeBox $x={x} $y={255} $w={219} $h={78} $bg="#0b0d0b">
    <PinRow $h={40}>
      <Pin color={GREEN} />
      <Text $size={12} $ls={0.2}>Duration</Text>
      <ValueBox>10,0</ValueBox>
    </PinRow>
    <Hazard>Development Only</Hazard>
    <CenterRow $pt={5}><Caret $up $w={5.5} $h={8} $color="#e0e0e0" /></CenterRow>
  </NodeBox>
);

const MathNode = () => (
  <>
    <NodeGlow $x={633} $y={568} $w={135} $h={58} $r={14} />
    <NodeBox $x={633} $y={568} $w={135} $h={58} $r={14} $bg="rgba(22,22,22,.9)">
      <Gloss $cut={76} $bg="linear-gradient(#6c6c6c, #2b2b2b 24%)" />
      <MathGrid>
        <MathCol>
          <MathRow><Pin color={GREEN} filled /></MathRow>
          <MathRow><Pin color={GREEN} /><ValueBox $ml={-1}>-1,0</ValueBox></MathRow>
        </MathCol>
        <MathSign><CrossIcon s={11} color="#a0a0a0" w={1.7} /></MathSign>
        <MathCol $align="flex-end">
          <MathRow $pr={2}><Pin color={GREEN} filled /></MathRow>
          <AddPin>Add pin<PlusIcon s={10} w={4.500} /></AddPin>
        </MathCol>
      </MathGrid>
    </NodeBox>
  </>
);

const FloorNode = () => (
  <>
    <NodeGlow $x={518} $y={891} $w={176} $h={39} $r={14} />
    <NodeBox $x={518} $y={891} $w={176} $h={39} $r={14} $bg="linear-gradient(90deg, #191919 5%, #16262e 45%, #191919 95%)">
      <Gloss $cut={63} $bg="linear-gradient(rgba(25,25,25,0), rgba(25,32,36,.85) 37%), linear-gradient(90deg, #777 2%, #2c7ba3 32%, #2f7da3 55%, #555 95%)" />
      <FloorRow>
        <HouseIcon />
        <FloorTitles>
          <Text $size={12} $bold $ls={0.2}>Floor</Text>
          <Text $size={12} $italic $color="#84835c">from Persistent Level</Text>
        </FloorTitles>
        <Pin color={BLUE} filled />
      </FloorRow>
    </NodeBox>
  </>
);

const ToolTip = styled.div`
  position: absolute;
  left: 125px;
  top: 92px;
  width: 180px;
  height: 50px;
  padding: 10px 0 0 16px;
  line-height: 28px;
  letter-spacing: -0.400px;
  color: rgba(30, 30, 30, 0.700);
  border: 1px solid rgba(60, 60, 60, 0.500);
  background: rgba(150, 150, 150, 0.220);
  box-shadow: 0 0 5px rgba(0, 0, 0, 0.350);
`;

const Corner = styled.div`
  position: absolute;
  left: 280px;
  top: 91px;
  width: 15px;
  height: 15px;
  background: linear-gradient(135deg, #c19a2c 50%, transparent 50%);
`;

const Star = () => (
  <svg width="29" height="29" viewBox="0 0 29 29">
    <path d="M14.500 2.500 18 11h8.500L20 17l2.300 9-7.800-5-7.800 5L9 17 2.500 11H11Z" fill="none" stroke="#dcdcdc" strokeWidth="2" />
  </svg>
);

const Arrow = ({ flip }) => (
  <svg width="26" height="34" viewBox="0 0 26 34">
    <path transform={flip ? 'translate(26 0) scale(-1 1)' : undefined} d="M0 17 14 0v8.500h11v16H14V34Z" fill="#858585" />
  </svg>
);

const Gap = styled.div`width: ${(p) => p.$w}px; flex: none;`;

const assets = [
  ['M_Asset', 'Platform'],
  ['M_Basic_Floor'],
  ['M_Basic_Wall'],
  ['M_Brick_Clay_', 'Beveled'],
  ['M_Brick_Clay_', 'New'],
  ['M_Brick_Clay_', 'Old'],
  ['M_Brick_Cut_', 'Stone'],
  ['M_Brick_Hewn', '_Stone'],
  ['M_Ceramic_', 'Tile_Checker'],
  ['M_Cobble', 'Stone_Pebble'],
  ['M_Cobble', 'Stone_Rough'],
  ['M_Cobble', 'Stone_Smooth'],
];

const menu = [['File', 58], ['Edit', 63], ['View', 70], ['Debug', 83], ['Window', 98], ['Help', 66]];

const Back = () => (
  <BackWindow>
    <BackTitle>
      <LogoBox $top={4}><Logo /></LogoBox>
      <TabShape $pad="1px 0 0 36px"><Text $shadow>Level1</Text></TabShape>
      <Spacer />
      <TutorialBadge><GradCap /></TutorialBadge>
      <ProjectName><Text $size={24} $ls={0.4}>ProgramowanieOlgaL</Text></ProjectName>
      <ControlGroup $top={0}>
        <Control $open $w={38} $pr={1} $r="0 0 0 3px"><MinGlyph /></Control>
        <Control $open $w={33}><RestoreGlyph /></Control>
        <Control $open $w={62} $pr={3} $r="0 0 3px 0"><CrossIcon s={15} color="#fff" w={2} /></Control>
      </ControlGroup>
      <Gap $w={3} />
    </BackTitle>
    <BackMenu />
    <BackBody>
      <BackLeft>
        <ContentBrowser>
          <AssetArea>
            {assets.map((lines, i) => (
              <Asset key={i} $selected={i === 2}>
                <AssetName>{lines.map((l) => <div key={l}>{l}</div>)}</AssetName>
              </Asset>
            ))}
          </AssetArea>
          <ThumbStrip>
            {assets.map((_, i) => <Thumb key={i} $c={i > 8 && i < 11 ? '#50545a' : '#6c6b6b'} $m={i > 8 && i < 11 ? '#666a6f' : '#828181'} />)}
          </ThumbStrip>
          <BrowserFooter>
            <Text $ls={0.06}>43 items (1 selected)</Text>
            <Spacer />
            <EyeIcon />
            <Text $ls={0.35}>View Options</Text>
            <Caret $w={6.5} $h={7} $color="#b5b5b5" />
          </BrowserFooter>
        </ContentBrowser>
        <BottomEdge />
      </BackLeft>
      <BackRight>
        <Outliner>
          <OutSearch><OutField><Lens s={23} /></OutField><FolderPlus /></OutSearch>
          <OutHeader><span>e</span><SortMark><Caret as="div" $w={6} $h={7} $color="#9c9c9c" /></SortMark></OutHeader>
          <OutList>
            <OutRows>
              <OutRow>tional</OutRow>
              <OutRow $shift={-4} $ls={0.1}>erStart</OutRow>
              <OutRow $link $ls={0.3}><LinkText>BP_Sky</LinkText></OutRow>
              <OutRow $shift={-2}>ight</OutRow>
            </OutRows>
            <OutTrack><OutThumb /></OutTrack>
          </OutList>
          <OutFooter>ptions<Caret $w={6} $h={7} $color="#b5b5b5" /></OutFooter>
        </Outliner>
        <BackDetails><Text $shadow>ils.</Text></BackDetails>
      </BackRight>
    </BackBody>
  </BackWindow>
);

const MyBlueprint = () => (
  <Column $w={272} $gap={7}>
    <PanelTab $pad="0 15px 0 8px">
      <BookIcon />
      <TabLabel><Text $ls={0.3} $shadow>My Blueprint</Text></TabLabel>
      <CrossIcon />
    </PanelTab>
    <Panel>
      <PanelTools>
        <AddNew><PlusIcon s={16} /><Text $ls={0.1}>Add New</Text><Gap $w={1} /><Caret $w={6} $h={8} $color="#fff" /></AddNew>
        <SearchField><Clip $w={27}><Text>Search</Text></Clip><Lens s={23} /></SearchField>
        <EyeIcon />
        <Gap $w={5} />
        <Caret $w={6} $h={8} $color="#dcdcdc" />
      </PanelTools>
      <Section $open>
        <Twisty />
        <Text $bold $ls={1.15} $shadow>Graphs</Text>
        <Spacer />
        <SectionAdd><PlusIcon s={16} /></SectionAdd>
      </Section>
      <Tree>
        <TreeRow $pl={1}>
          <Twisty />
          <TreeIcon $w={24}><GraphIcon w={24} h={18} /></TreeIcon>
          <Text $ls={1.25}>EventGraph</Text>
        </TreeRow>
        <TreeRow $pl={30}><TreeIcon $w={23}><DiamondIcon /></TreeIcon><Text $ls={1.03}>Event BeginPlay</Text></TreeRow>
        {['Mouse X', 'Mouse Y'].map((t) => (
          <TreeRow key={t} $pl={30}><TreeIcon $w={23}><MouseIcon /></TreeIcon><Text $ls={1.1}>{t}</Text></TreeRow>
        ))}
        {['W', 'D', 'A', 'S'].map((t) => (
          <TreeRow key={t} $pl={30}><TreeIcon $w={23}><KeysIcon /></TreeIcon><Text>{t}</Text></TreeRow>
        ))}
      </Tree>
      {['Functions', 'Macros', 'Variables', 'Event Dispatchers'].map((t) => (
        <Section key={t}>
          <Text $bold $ls={t === 'Event Dispatchers' ? 1.35 : 1.15} $shadow>{t}</Text>
          {t === 'Functions' && <><Gap $w={7} /><Text $size={16} $ls={0.47} $color="#8f8f8f">(19 Overridable)</Text></>}
          <Spacer />
          <SectionAdd><PlusIcon s={16} /></SectionAdd>
        </Section>
      ))}
    </Panel>
  </Column>
);

const ToolButton = ({ w, icon, label, ml }) => (
  <Tool $w={w}><ToolPicture $ml={ml}>{icon}</ToolPicture><ToolLabel>{label}</ToolLabel></Tool>
);

const Center = () => (
  <Column $w={1257} $gap={8}>
    <Toolbar>
      <ToolStrip>
        <ToolButton w={86} icon={<CompileIcon />} label="Compile" ml={1} />
        <ToolArrow $w={40}><Caret $w={6.5} $h={8} /></ToolArrow>
        <ToolRule />
        <ToolButton w={80} icon={<SaveIcon />} label="Save" ml={4} />
        <ToolButton w={80} icon={<BrowseIcon />} label="Browse" />
        <ToolRule />
        <ToolButton w={78} icon={<FindIcon />} label="Find" ml={2} />
        <ToolRule />
        <ToolButton w={147} icon={<SettingsIcon />} label="Class Settings" />
        <ToolButton w={146} icon={<DefaultsIcon />} label="Class Defaults" />
        <ToolRule />
        <ToolButton w={78} icon={<PlayIcon />} label="Play" ml={-5} />
        <ToolArrow $w={42}><Caret $w={6.5} $h={8} /></ToolArrow>
        <Filter>
          <FilterRow>
            <Combo><Text $ls={0.14}>Level141</Text><Caret $w={6} $h={8} $color="#111" /></Combo>
            <Lens s={19} color="#b8b8b8" w={3} />
          </FilterRow>
          <Text $ls={0.35}>Debug Filter</Text>
        </Filter>
      </ToolStrip>
    </Toolbar>
    <PanelTab $accent $pad="0 15px 0 8px">
      <GraphIcon w={25} h={20} />
      <TabLabel><Text $ls={0.5} $shadow>Event Graph</Text></TabLabel>
      <CrossIcon />
    </PanelTab>
    <GraphPanel>
      <Canvas>
        <GridLines />
        <Vignette />
        <Wires />
        <DevNode x={940} />
        <DevNode x={1490} />
        <EventNode y={438} name="Mouse Y" />
        <EventNode y={697} name="Mouse X" />
        <MathNode />
        <FloorNode />
        <FunctionNode y={422} w={218} inputs={[
          { label: 'Delta Rotation X (Roll)', value: '0,0' },
          { label: 'Delta Rotation Y (Pitch)' },
          { label: 'Delta Rotation Z (Yaw)', value: '0,0' },
        ]} />
        <FunctionNode y={681} w={212} inputs={[
          { label: 'Delta Rotation X (Roll)' },
          { label: 'Delta Rotation Y (Pitch)', value: '0,0' },
          { label: 'Delta Rotation Z (Yaw)', value: '0,0' },
        ]} />
        <Crumbs>
          <Star />
          <CrumbRule $m="0 0 0 10px" />
          <Gap $w={17} /><Arrow /><Gap $w={37} /><Arrow flip />
          <CrumbRule $m="0 16px 0 22px" />
          <GraphIcon w={36} h={28} links />
          <Gap $w={21} />
          <Text $size={28} $ls={0.2}>Level1</Text>
          <Gap $w={14} />
          <svg width="14" height="22" viewBox="0 0 14 22"><path d="M2 1 11.500 11 2 21" fill="none" stroke="#d4d4d4" strokeWidth="3" /></svg>
          <Gap $w={13} />
          <Text $size={28} $ls={0.75}>Event Graph</Text>
          <Spacer />
          <Condensed $size={32} $sx={0.868} $dy={-5} $color="#343434">Zoom -3</Condensed>
        </Crumbs>
        <Watermark><Condensed $size={96} $sx={0.876} $color="rgba(255,255,255,.19)">LEVEL BLUEPRINT</Condensed></Watermark>
      </Canvas>
    </GraphPanel>
  </Column>
);

const Details = () => (
  <Column $w={282}>
    <PanelTab $pad="0 16px 0 9px">
      <InfoLens />
      <TabLabel><Text $ls={0.15} $shadow>Details</Text></TabLabel>
      <CrossIcon />
    </PanelTab>
    <Panel />
  </Column>
);

export default function App() {
  return (
    <Desktop>
      <Global />
      <Back />
      <FrontWindow>
        <FrontTitle>
          <LogoBox $top={12}><Logo /></LogoBox>
          <TabHolder>
            <TabShape $pad="0 28px 4px 25px">
              <LevelBookIcon />
              <Gap $w={8} />
              <TabTitle><Text $ls={0.35} $shadow>Level1&nbsp; - Level Blueprint Editor</Text></TabTitle>
              <Gap $w={8} />
              <CrossIcon />
            </TabShape>
          </TabHolder>
          <Spacer />
          <BigBadge><TutorialBadge><GradCap /></TutorialBadge></BigBadge>
          <ControlGroup $top={7}>
            <Control $w={38} $pr={1} $r="0 0 0 3px"><MinGlyph /></Control>
            <Control $w={34}><MaxGlyph /></Control>
            <Control $w={62} $pr={4} $r="0 0 3px 0"><CrossIcon s={15} color="#fff" w={2} /></Control>
          </ControlGroup>
          <Gap $w={8} />
        </FrontTitle>
        <MenuBar>
          {menu.map(([t, w]) => <MenuItem key={t} $w={w} $active={t === 'Edit'}>{t}</MenuItem>)}
        </MenuBar>
        <Body>
          <MyBlueprint />
          <Center />
          <Details />
        </Body>
        <Corner />
        <ToolTip>Open the edit menu</ToolTip>
      </FrontWindow>
    </Desktop>
  );
}
